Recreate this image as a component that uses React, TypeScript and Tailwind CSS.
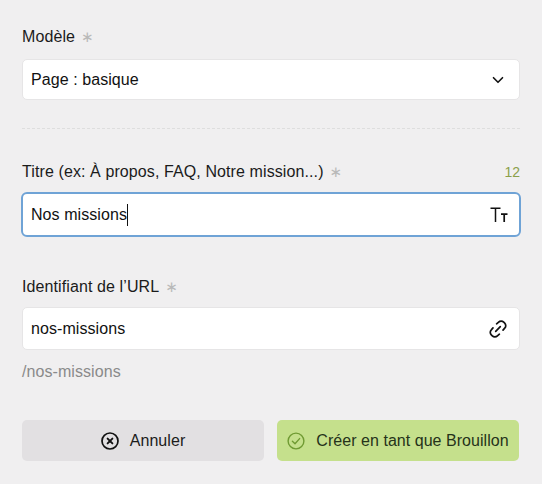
import { ChevronDown } from 'lucide-react';

function Label({ text, count }: { text: string; count?: number }) {
  return (
    <div className="flex h-[20px] items-center justify-between">
      <span className="flex items-center text-[16px] leading-[20px] tracking-[0.1px] text-[#1b1b1b]">
        {text}
        <span className="ml-[6px] font-['DejaVu_Sans',sans-serif] text-[15px] text-[#b9b9b9]">∗</span>
      </span>
      {count !== undefined && <span className="text-[14px] text-[#8ba04a]">{count}</span>}
    </div>
  );
}

function TextSizeIcon() {
  return (
    <svg width="18" height="16" viewBox="0 0 18 16" fill="none" stroke="#111" strokeWidth="1.5">
      <path d="M0.5 1.2H10.5M5.5 1.2V15" />
      <path d="M11 7.2H17.5M14.2 7.2V15" strokeWidth="1.7" />
    </svg>
  );
}

function LinkIcon() {
  return (
    <svg width="18" height="18" viewBox="0 0 18 18" fill="none" stroke="#111" strokeWidth="1.7" strokeLinecap="round">
      <path d="M7.6 3.8 9.6 2.1a3.6 3.6 0 0 1 5.1 0l1 1a3.6 3.6 0 0 1 0 5.1l-1.7 1.9" />
      <path d="M10.4 14.2 8.4 15.9a3.6 3.6 0 0 1-5.1 0l-1-1a3.6 3.6 0 0 1 0-5.1L4 7.9" />
      <path d="M6.7 11.3 11.3 6.7" />
    </svg>
  );
}

function CancelIcon() {
  return (
    <svg width="18" height="18" viewBox="0 0 18 18" fill="none" stroke="#111" strokeWidth="1.7" strokeLinecap="round">
      <circle cx="9" cy="9" r="8" />
      <path d="M6.6 6.6 11.4 11.4M11.4 6.6 6.6 11.4" strokeWidth="1.9" />
    </svg>
  );
}

function CheckIcon() {
  return (
    <svg width="18" height="18" viewBox="0 0 18 18" fill="none" stroke="#6f9a32" strokeWidth="1.4" strokeLinecap="round" strokeLinejoin="round">
      <circle cx="9" cy="9" r="7.9" />
      <path d="M5.4 9.3 8 11.7 12.6 6.6" />
    </svg>
  );
}

export default function App() {
  return (
    <div className="flex h-[484px] w-[542px] flex-col overflow-hidden bg-[#f0eff0] px-[22px] pt-[27px] font-['Liberation_Sans',Arial,sans-serif]">
      <Label text="Modèle" />
      <div className="mt-[12px] flex h-[41px] items-center justify-between rounded-[5px] border border-[#e6e5e6] bg-white pl-[8px] pr-[12px] text-[16px] tracking-[0.07px] text-[#111]">
        <span>Page : basique</span>
        <ChevronDown size={18} strokeWidth={2.2} color="#111" />
      </div>

      <div className="mt-[28px] border-t border-dashed border-[#dedede]" />

      <div className="mt-[33px]">
        <Label text="Titre (ex: À propos, FAQ, Notre mission...)" count={12} />
      </div>
      <div className="mx-[-1px] mt-[10px] flex h-[45px] items-center justify-between rounded-[6px] border-2 border-[#6fa3d6] bg-white pl-[8px] pr-[11px] text-[16px] tracking-[0.07px] text-[#111]">
        <span className="flex items-center">
          Nos missions
          <span className="h-[22px] w-[1px] bg-[#111]" />
        </span>
        <TextSizeIcon />
      </div>

      <div className="mt-[40px]">
        <Label text="Identifiant de l’URL" />
      </div>
      <div className="mt-[10px] flex h-[43px] items-center justify-between rounded-[5px] border border-[#e6e5e6] bg-white pl-[8px] pr-[12px] text-[16px] tracking-[0.07px] text-[#111]">
        <span className="pt-[1px]">nos-missions</span>
        <LinkIcon />
      </div>
      <div className="mt-[12px] text-[16px] leading-[20px] tracking-[0.07px] text-[#8a8a8a]">/nos-missions</div>

      <div className="mt-[38px] flex gap-[13px]">
        <button className="flex h-[41px] w-[242px] items-center justify-center gap-[11px] rounded-[5px] bg-[#e2e0e2] text-[16px] text-[#1b1b1b]">
          <CancelIcon />
          <span className="tracking-[0.07px]">Annuler</span>
        </button>
        <button className="flex h-[41px] w-[242px] items-center justify-center gap-[11px] rounded-[5px] bg-[#c5e08c] text-[16px] text-[#25331a]">
          <CheckIcon />
          <span className="tracking-[0.04px]">Créer en tant que Brouillon</span>
        </button>
      </div>
    </div>
  );
}
